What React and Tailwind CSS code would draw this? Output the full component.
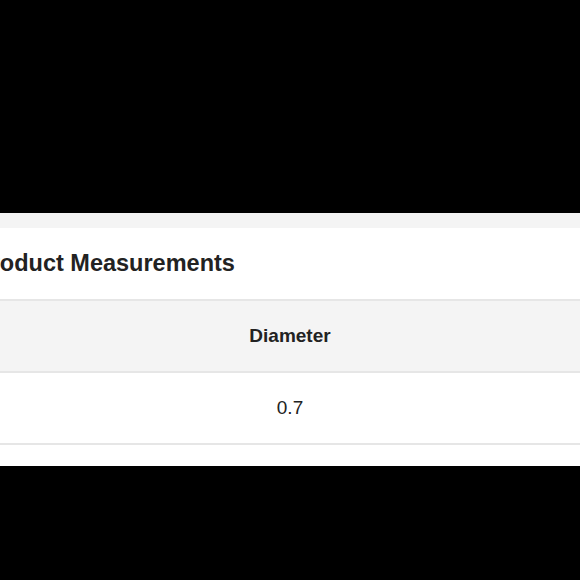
export default function App() {
  return (
    <div className="h-[580px] w-[580px] overflow-hidden bg-black" style={{ fontFamily: '"Liberation Sans", Arial, sans-serif' }}>
      <div className="h-[213px]" />

      {/* Card */}
      <div className="bg-white">
        <div className="h-[15px] bg-[#f4f4f4]" />
        <div className="flex h-[73px] items-center border-b-2 border-[#e6e6e6] pt-[1px]">
          <h2 className="ml-[-25px] whitespace-nowrap text-[23.5px] font-bold text-[#222]">Product Measurements</h2>
        </div>

        <table className="w-full border-collapse">
          <thead>
            <tr className="bg-[#f4f4f4]">
              <th className="h-[71px] border-b-2 border-[#e6e6e6] pt-[1px] text-center text-[19px] font-bold text-[#222]">Diameter</th>
            </tr>
          </thead>
          <tbody>
            <tr>
              <td className="h-[72px] border-b-2 border-[#e6e6e6] text-center text-[19px] text-[#222]">0.7</td>
            </tr>
          </tbody>
        </table>
        <div className="h-[21px]" />
      </div>
    </div>
  );
}
